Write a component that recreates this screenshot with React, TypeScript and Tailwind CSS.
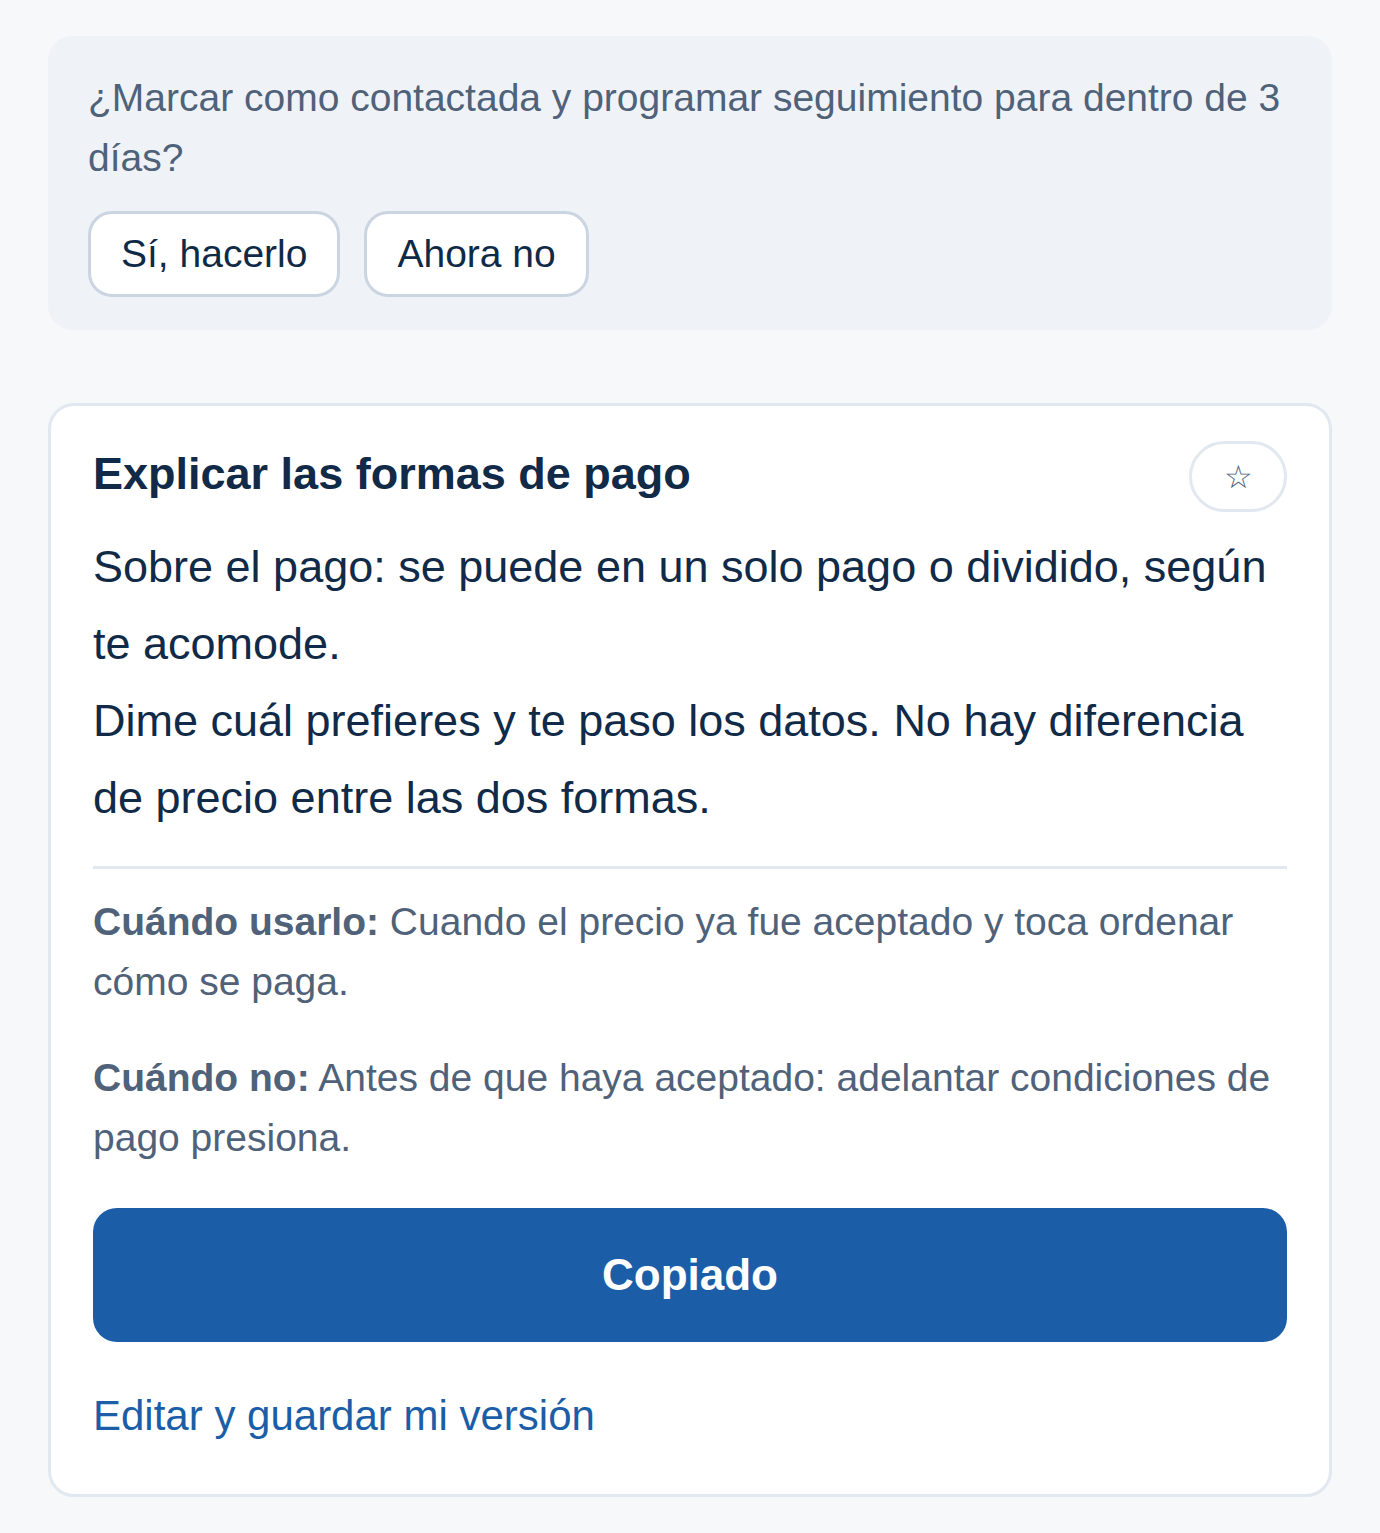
import React from "react";

export default function App() {
  return (
    <div className="min-h-[1533px] bg-[#f7f8fa] px-[48px] pt-[36px] pb-[36px] font-['Liberation_Sans',Arial,sans-serif]">
      <div className="rounded-[24px] bg-[#eff3f8] px-[40px] pt-[32px] pb-[33px]">
        <p className="text-[39px] leading-[60px] text-[#4f6279]">
          ¿Marcar como contactada y programar seguimiento para dentro de 3 días?
        </p>
        <div className="mt-[23px] flex gap-[24px]">
          <button className="h-[86px] rounded-[24px] border-[3px] border-[#cbd5e1] bg-white px-[30px] text-[39px] text-[#0f2a47]">
            Sí, hacerlo
          </button>
          <button className="h-[86px] rounded-[24px] border-[3px] border-[#cbd5e1] bg-white px-[30px] text-[39px] text-[#0f2a47]">
            Ahora no
          </button>
        </div>
      </div>

      <div className="mt-[73px] rounded-[26px] border-[3px] border-[#e2e8f0] bg-white px-[42px] pt-[35px] pb-[48px]">
        <div className="flex items-start justify-between">
          <h2 className="mt-[5px] text-[45px] font-bold leading-[56px] text-[#102a48]">
            Explicar las formas de pago
          </h2>
          <button className="flex h-[71px] w-[98px] items-center justify-center rounded-full border-[3px] border-[#e2e8f0] bg-white text-[32px] leading-none text-[#4f6279]">
            ☆
          </button>
        </div>
        <p className="mt-[16px] whitespace-pre-line text-[45px] leading-[77px] text-[#102a48]">
          {"Sobre el pago: se puede en un solo pago o dividido, según te acomode.\nDime cuál prefieres y te paso los datos. No hay diferencia de precio entre las dos formas."}
        </p>
        <div className="mt-[30px] border-t-[3px] border-[#e2e8f0] pt-[23px] text-[39px] leading-[60px] text-[#4f6279]">
          <p>
            <span className="font-bold">Cuándo usarlo:</span> Cuando el precio ya fue aceptado y toca ordenar cómo se paga.
          </p>
          <p className="mt-[36px]">
            <span className="font-bold">Cuándo no:</span> Antes de que haya aceptado: adelantar condiciones de pago presiona.
          </p>
        </div>
        <button className="mt-[40px] flex h-[134px] w-full items-center justify-center rounded-[24px] bg-[#1b5ea7] text-[44px] font-bold text-white">
          Copiado
        </button>
        <div className="mt-[44px] text-[42px] leading-[60px] text-[#1b5ea7]">
          Editar y guardar mi versión
        </div>
      </div>
    </div>
  );
}
